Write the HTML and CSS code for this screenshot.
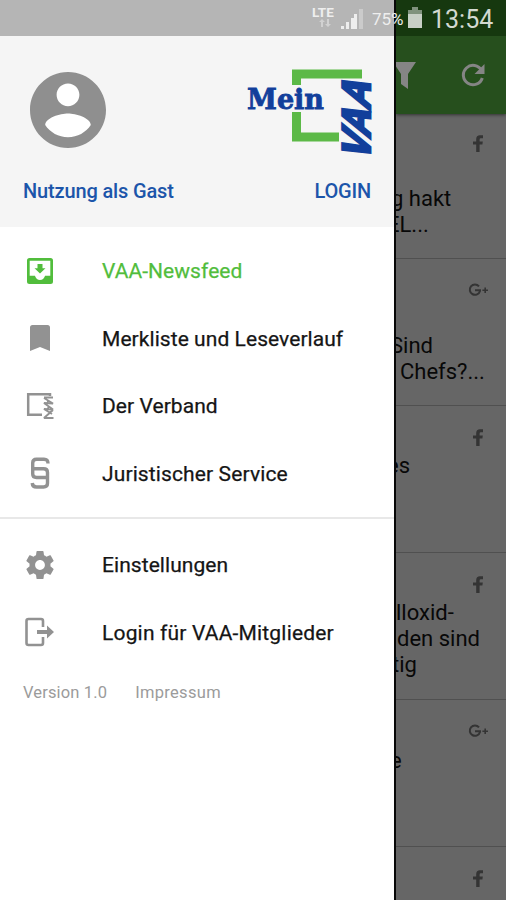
FILE: index.html
```html
<!DOCTYPE html>
<html lang="de">
<head>
<meta charset="utf-8">
<title>Mein VAA</title>
<link rel="stylesheet" href="styles.css">
</head>
<body>
<svg class="defs" width="0" height="0">
  <symbol id="fb" viewBox="0 0 12 19"><path d="M11 1.2v3H8.8Q7.6 4.200 7.600 5.400V7.500H10.800L10.400 10.500H7.600V18H4.200V10.500H1V7.500H4.200V5Q4.200 1.200 8 1.200Z"/></symbol>
  <symbol id="gp" viewBox="0 0 22 14"><path d="M11 3.300A5.200 5.200 0 1 0 12 8V7.300H7" fill="none" stroke="currentColor" stroke-width="2"/><path d="M16.400 4.500h1.600v2h2v1.600h-2v2h-1.600v-2h-2V6.500h2z"/></symbol>
</svg>
<div class="screen">
  <aside class="drawer">
    <header class="profile">
      <div class="profile-top">
        <svg class="avatar" viewBox="2 2 20 20"><circle cx="12" cy="12" r="9.500" fill="#fff"/><path d="M12 2C6.480 2 2 6.480 2 12s4.480 10 10 10 10-4.480 10-10S17.520 2 12 2zm0 3c1.660 0 3 1.340 3 3s-1.340 3-3 3-3-1.340-3-3 1.340-3 3-3zm0 14.200c-2.500 0-4.710-1.280-6-3.220.030-1.990 4-3.080 6-3.080 1.990 0 5.970 1.090 6 3.080-1.290 1.940-3.500 3.220-6 3.220z"/></svg>
        <svg class="logo" viewBox="0 0 126 86" width="126" height="86">
          <path d="M46 19V3.500h70v9H55V19zM46 46h9v20.500h38v9H46z" fill="#5cb947"/>
          <text class="logo-mein" x="1" y="43" textLength="77" lengthAdjust="spacingAndGlyphs">Mein</text>
          <g transform="translate(123.800 85) rotate(-90) skewX(-25)"><text class="logo-vaa" x="-11.500" y="0" textLength="79" lengthAdjust="spacingAndGlyphs">VAA</text></g>
        </svg>
      </div>
      <div class="profile-links"><a class="guest">Nutzung als Gast</a><a class="login">LOGIN</a></div>
    </header>
    <nav class="menu">
      <a class="item active"><svg viewBox="0 0 32 32"><path fill-rule="evenodd" d="M5.500 3h21Q29 3 29 5.500v21Q29 29 26.500 29h-21Q3 29 3 26.500v-21Q3 3 5.500 3zM5.700 5.700v15h5.200q1.500 4.200 5.100 4.200t5.100-4.200h5.200v-15zM13.500 9h5v4.200h3L16 18.500l-5.500-5.300h3z"/></svg><span class="t1">VAA-Newsfeed</span></a>
      <a class="item"><svg viewBox="0 0 32 32"><path d="M8.500 3h15Q26 3 26 5.500V29l-10-4-10 4V5.500Q6 3 8.500 3z"/></svg><span class="t2">Merkliste und Leseverlauf</span></a>
      <a class="item"><svg viewBox="0 0 32 32"><path fill="none" stroke="currentColor" stroke-width="2.500" d="M26 6V4.200H4.200v20.600H18"/><path fill="none" stroke="currentColor" stroke-width="1.900" stroke-linejoin="bevel" d="M20 7.500h9M20 8l9 5.500-9-.5 9 6.500-9-.5 8 5M29 20l-9 8h9.500M24.500 10l-1 3M25 16l-1.500 3.500"/></svg><span class="t3">Der Verband</span></a>
      <a class="item"><svg viewBox="0 0 32 32"><path fill="none" stroke="currentColor" stroke-width="3.400" d="M24 6.500Q24 2.200 20 2.200H12.500Q8.700 2.200 8.700 6V17Q8.700 20.500 12.500 20.500H22M10 11.800H19.500Q23.500 11.800 23.500 15.500V26.300Q23.500 30 19.500 30H12.500Q8.500 30 8.200 26"/></svg><span class="t4">Juristischer Service</span></a>
      <hr class="rule">
      <a class="item"><svg viewBox="0 0 32 32"><path transform="translate(-.8 -.8) scale(1.400)" d="M19.430 12.980c.040-.320.070-.640.070-.980s-.030-.660-.070-.980l2.110-1.650c.190-.150.240-.420.120-.640l-2-3.460c-.120-.220-.390-.300-.610-.220l-2.490 1c-.520-.400-1.080-.730-1.690-.980l-.380-2.650C14.460 2.180 14.250 2 14 2h-4c-.250 0-.460.180-.490.420l-.380 2.650c-.610.250-1.170.590-1.690.980l-2.490-1c-.230-.090-.490 0-.610.220l-2 3.460c-.130.220-.070.490.120.640l2.110 1.650c-.040.320-.070.650-.070.980s.030.660.070.980l-2.110 1.650c-.190.150-.240.420-.120.640l2 3.460c.120.220.390.300.610.220l2.490-1c.520.400 1.080.730 1.690.980l.380 2.650c.030.240.240.420.490.420h4c.250 0 .460-.180.490-.420l.380-2.650c.610-.250 1.170-.590 1.690-.980l2.490 1c.230.090.490 0 .610-.220l2-3.460c.120-.220.070-.490-.120-.640l-2.110-1.650zM12 15.500c-1.930 0-3.500-1.570-3.500-3.500s1.570-3.500 3.500-3.500 3.500 1.570 3.500 3.500-1.570 3.500-3.500 3.500z"/></svg><span class="t5">Einstellungen</span></a>
      <a class="item"><svg viewBox="0 0 32 32"><path fill="none" stroke="currentColor" stroke-width="2.600" d="M19 11V5Q19 3 17 3H4.500Q2.500 3 2.500 5v22Q2.500 29 4.500 29H17Q19 29 19 27v-6"/><path d="M13 14h10V9.500l7 6.500-7 6.500V18H13z"/></svg><span class="t6">Login für VAA-Mitglieder</span></a>
    </nav>
    <footer class="meta"><span class="m1">Version 1.0</span><span class="m2">Impressum</span></footer>
  </aside>
  <main class="feed">
    <div class="toolbar">
      <svg class="filter" viewBox="0 0 24 28"><path d="M0 0h23L15 12v15l-7-5V12z"/></svg>
      <svg class="refresh" viewBox="0 0 24 24"><path d="M20.600 7.500A9.700 9.700 0 1 0 21.300 15" fill="none" stroke="currentColor" stroke-width="3"/><path d="M23.500 1v10h-10z"/></svg>
    </div>
    <article class="card first late"><svg class="fb"><use href="#fb"/></svg><p><span class="a1">g hakt</span><br><span class="a2">EL...</span></p></article>
    <article class="card late"><svg class="gp"><use href="#gp"/></svg><p><span class="b1">Sind</span><br><span class="b2">Chefs?...</span></p></article>
    <article class="card"><svg class="fb"><use href="#fb"/></svg><p><span class="c1">es</span></p></article>
    <article class="card"><svg class="fb"><use href="#fb"/></svg><p><span class="d1">lloxid-</span><br><span class="d2">den sind</span><br><span class="d3">tig</span></p></article>
    <article class="card"><svg class="gp"><use href="#gp"/></svg><p><span class="e1">e</span></p></article>
    <article class="card"><svg class="fb"><use href="#fb"/></svg></article>
  </main>
  <div class="status">
    <div class="lte"><b>LTE</b><svg viewBox="0 0 12 9"><path d="M3 0L0 3h2v5h2V3h2zM9 8l3-3h-2V0H8v5H6z"/></svg></div>
    <svg class="signal" viewBox="0 0 22 22"><path d="M0 21v-3h3v3zM5 21v-7h3v7zM10 21V10h3v11z"/><path d="M13 21V6h3v15z"/><path opacity=".4" d="M18 21V1h4v20z"/></svg>
    <span class="pct">75%</span>
    <svg class="battery" viewBox="0 0 14 21"><path opacity=".6" d="M4 0h6v3h4v4H0V3h4z"/><path d="M0 7h14v14H0z"/></svg>
    <span class="clock">13:54</span>
  </div>
</div>
</body>
</html>
```
FILE: styles.css
```css
body { margin: 0; font-family: Roboto, sans-serif; }
.defs { position: absolute; }
.screen { position: relative; display: flex; width: 506px; height: 900px; overflow: hidden; background: #666; }
svg { display: block; fill: currentColor; flex: none; }

.drawer { box-sizing: border-box; width: 396px; height: 900px; flex: none; background: #fff; border-right: 2px solid #080808; }
.profile { box-sizing: border-box; height: 227px; padding: 66px 23px 0; background: #f5f5f5; }
.profile-top { display: flex; justify-content: space-between; height: 104px; }
.avatar { width: 76px; height: 76px; margin: 6px 0 0 7px; color: #8f8f8f; }
.logo { overflow: visible; margin-right: -1px; }
.logo-mein { font: bold 27px "DejaVu Serif", serif; fill: #123f9b; stroke: #123f9b; stroke-width: .8px; }
.logo-vaa { font: bold 40px "Liberation Sans", sans-serif; fill: #123f9b; stroke: #123f9b; stroke-width: 2.800px; }
.profile-links { display: flex; justify-content: space-between; font-size: 20px; font-weight: 500; line-height: 42px; color: #1c55aa; }
.guest { letter-spacing: -.15px; }
.login { letter-spacing: -.2px; }

.menu { padding-top: 10px; }
.item { display: flex; align-items: center; gap: 46px; height: 67.500px; padding-left: 24px; font-size: 21px; color: #151515; white-space: nowrap; }
.item svg { width: 32px; height: 32px; color: #929292; }
.item span { letter-spacing: .06px; padding-top: 1px; -webkit-text-stroke: .25px currentColor; }
.item .t4 { letter-spacing: .12px; }
.item .t6 { letter-spacing: .18px; }
.item.active, .item.active svg { color: #51bd3c; }
.rule { height: 2px; margin: 10px 0 12px; border: 0; background: #e8e8e8; }
.meta { display: flex; gap: 28px; padding: 16px 23px; font-size: 16.500px; line-height: 22px; color: #9b9b9b; }
.m1 { letter-spacing: .15px; }
.m2 { letter-spacing: .3px; }

.feed { flex: 1; min-width: 0; overflow: hidden; color: #080808; }
.toolbar { box-sizing: border-box; display: flex; align-items: flex-start; gap: 44px; height: 114px; padding-top: 62px; background: #264f1d; color: #858585; box-shadow: 0 1px 3px #333; }
.filter { width: 24px; height: 28px; margin-left: -3px; }
.refresh { width: 24px; height: 24px; margin-top: 1px; }
.card { box-sizing: border-box; display: flow-root; height: 147px; padding: 22px 18px 0 0; border-top: 1.500px solid #505050; }
.card.first { height: 144px; padding-top: 19px; border-top-color: transparent; }
.card svg { margin-left: auto; color: #343434; }
.fb { width: 12px; height: 19px; margin-right: 4px; }
.gp { width: 22px; height: 14px; margin: 2px -2px 0 0; }
.card p { margin: 6px 0 0; font-size: 22px; line-height: 26.200px; white-space: nowrap; }
.card.late p { margin-top: 33px; }
.card .gp + p { margin-top: 10px; }
.card.late .gp + p { margin-top: 36px; }
.card p span { margin-left: var(--x, 0); }
.a1 { --x: -5px; } .a2 { --x: -9px; }
.b1 { --x: -6px; } .b2 { --x: 4px; }
.c1 { --x: -9px; } .d1 { --x: 0px; } .d2 { --x: 1px; } .d3 { --x: -4px; } .e1 { --x: -6px; }

.status { position: absolute; inset: 0 0 auto; display: flex; height: 36px; padding-left: 312px; background: linear-gradient(90deg, #b5b5b5 394px, #080808 394px 396px, #16380f 396px); color: #eee; white-space: nowrap; }
.lte { width: 24px; padding-top: 5px; font-size: 13.500px; line-height: 14px; }
.lte svg { width: 12px; height: 9px; margin-left: 7px; opacity: .5; }
.signal { width: 22px; height: 22px; margin: 8px 0 0 5px; }
.pct { width: 36px; margin-left: 9px; font-size: 17px; line-height: 38px; }
.battery { width: 14px; height: 21px; margin-top: 7px; color: #c8cfc6; }
.clock { margin-left: 9px; font-size: 25px; line-height: 39px; color: #d3d9d1; }
```
